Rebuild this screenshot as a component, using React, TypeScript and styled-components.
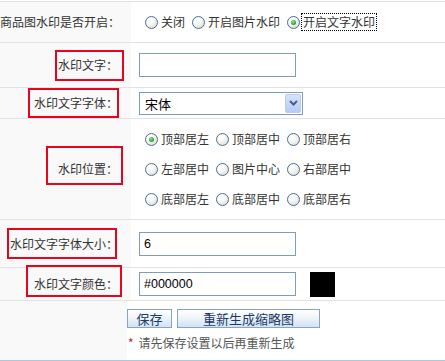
import styled, { createGlobalStyle } from 'styled-components'

const Global = createGlobalStyle`
  html, body {
    margin: 0;
    padding: 0;
    background: #fff;
    overflow: hidden;
  }
  body {
    font-family: "Noto Sans CJK SC", "Liberation Sans", sans-serif;
    font-size: 12px;
    color: #333;
  }
`

const Form = styled.div`
  width: 445px;
  padding-top: 1px;
`

const Row = styled.div<{ $h: number; $left?: number; $last?: boolean }>`
  display: grid;
  grid-template-columns: ${p => p.$left ?? 131}px 1fr;
  height: ${p => p.$h}px;
  border-top: 1px solid #e2e2e2;
  border-bottom: ${p => (p.$last ? '1px solid #a9c9e2' : 'none')};
`

const LabelCell = styled.div<{ $pr?: number }>`
  display: flex;
  align-items: center;
  justify-content: flex-end;
  padding-right: ${p => p.$pr ?? 13}px;
  background: #f9f9f9;
  white-space: nowrap;
`

const FieldCell = styled.div<{ $pad?: number }>`
  display: flex;
  align-items: center;
  padding-left: ${p => p.$pad ?? 8}px;
`

const Label = styled.span`
  position: relative;
  line-height: 14px;
  color: #333;
`

// red annotation frame drawn over the label
const Mark = styled.span<{ $inset: string }>`
  position: absolute;
  inset: ${p => p.$inset};
  border: 2px solid #e8041e;
`

const Radios = styled.div`
  display: flex;
  align-items: center;
  padding-left: 6px;
`

const PosGrid = styled.div`
  display: grid;
  grid-template-columns: repeat(3, max-content);
  grid-auto-rows: 30px;
  align-items: center;
  padding-left: 6px;
`

const Option = styled.label<{ $focus?: boolean }>`
  display: inline-flex;
  align-items: center;
  margin-right: 7px;
  white-space: nowrap;
  line-height: 14px;

  span {
    outline: ${p => (p.$focus ? '1px dotted #000' : 'none')};
    outline-offset: 1px;
  }
`

const Dot = styled.i<{ $on?: boolean }>`
  position: relative;
  display: inline-block;
  width: 11px;
  height: 11px;
  margin-right: 3px;
  border: 1px solid #4f6e92;
  border-radius: 50%;
  background: radial-gradient(circle at 35% 30%, #ffffff 20%, #e6e6e0 70%, #cfcfc8 100%);

  &::after {
    content: '';
    display: ${p => (p.$on ? 'block' : 'none')};
    position: absolute;
    left: 3px;
    top: 3px;
    width: 5px;
    height: 5px;
    border-radius: 50%;
    background: radial-gradient(circle at 40% 35%, #8de08d, #1f9a1f 75%);
  }
`

const TextBox = styled.div`
  box-sizing: border-box;
  width: 157px;
  height: 24px;
  padding: 0 4px;
  border: 1px solid #7f9db9;
  background: #fff;
  display: flex;
  align-items: center;
  font-family: "Liberation Sans", Arial, sans-serif;
  font-size: 12.5px;
  color: #000;
`

const Select = styled.div`
  box-sizing: border-box;
  width: 164px;
  height: 23px;
  padding: 1px 1px 1px 5px;
  border: 1px solid #7f9db9;
  background: #fff;
  display: flex;
  align-items: center;
  justify-content: space-between;
  font-size: 13px;
  color: #000;
`

const DropBtn = styled.span`
  box-sizing: border-box;
  width: 16px;
  height: 19px;
  display: flex;
  align-items: center;
  justify-content: center;
  border: 1px solid #bccbf0;
  border-radius: 2px;
  background: linear-gradient(#d6e2fd, #b8cbf6);
`

const Swatch = styled.div`
  width: 25px;
  height: 25px;
  margin-left: 14px;
  background: #000;
`

const Actions = styled.div`
  display: flex;
  flex-direction: column;
  padding-top: 8px;
`

const Buttons = styled.div`
  display: flex;
  gap: 5px;
`

const Button = styled.button<{ $w: number }>`
  box-sizing: border-box;
  width: ${p => p.$w}px;
  height: 19px;
  padding: 0;
  border: 1px solid #8aa3bf;
  background: linear-gradient(#ffffff, #f1f6fc 40%, #d3e2f4);
  font-family: "Noto Sans CJK SC", sans-serif;
  font-size: 13px;
  line-height: 15px;
  color: #1c3a66;
`

const Note = styled.div`
  margin-top: 8px;
  padding-left: 1px;
  line-height: 14px;
  color: #555;

  b {
    color: #e0101e;
    font-weight: normal;
    margin-right: 5px;
  }
`

const positions = [
  '顶部居左', '顶部居中', '顶部居右',
  '左部居中', '图片中心', '右部居中',
  '底部居左', '底部居中', '底部居右',
]

export default function App() {
  return (
    <Form>
      <Global />
      <Row $h={40}>
        <LabelCell $pr={11}>
          <Label>商品图水印是否开启：</Label>
        </LabelCell>
        <FieldCell>
          <Radios>
            <Option><Dot />关闭</Option>
            <Option><Dot />开启图片水印</Option>
            <Option $focus><Dot $on /><span>开启文字水印</span></Option>
          </Radios>
        </FieldCell>
      </Row>

      <Row $h={44}>
        <LabelCell>
          <Label>
            水印文字：
            <Mark $inset="-8px -6px -9px -3px" />
          </Label>
        </LabelCell>
        <FieldCell>
          <TextBox />
        </FieldCell>
      </Row>

      <Row $h={30}>
        <LabelCell>
          <Label>
            水印文字字体：
            <Mark $inset="-8px -1px -8px -6px" />
          </Label>
        </LabelCell>
        <FieldCell>
          <Select>
            宋体
            <DropBtn>
              <svg width="9" height="6" viewBox="0 0 9 6">
                <path d="M1 1 L4.5 4.5 L8 1" fill="none" stroke="#4a5f86" strokeWidth="2" />
              </svg>
            </DropBtn>
          </Select>
        </FieldCell>
      </Row>

      <Row $h={100}>
        <LabelCell>
          <Label>
            水印位置：
            <Mark $inset="-16px -5px -9px -12px" />
          </Label>
        </LabelCell>
        <FieldCell>
          <PosGrid>
            {positions.map((p, i) => (
              <Option key={p}>
                <Dot $on={i === 0} />
                {p}
              </Option>
            ))}
          </PosGrid>
        </FieldCell>
      </Row>

      <Row $h={47}>
        <LabelCell>
          <Label>
            水印文字字体大小：
            <Mark $inset="-9px 1px -8px -3px" />
          </Label>
        </LabelCell>
        <FieldCell>
          <TextBox>6</TextBox>
        </FieldCell>
      </Row>

      <Row $h={32}>
        <LabelCell>
          <Label>
            水印文字颜色：
            <Mark $inset="-12px -4px -6px -8px" />
          </Label>
        </LabelCell>
        <FieldCell>
          <TextBox>#000000</TextBox>
          <Swatch />
        </FieldCell>
      </Row>

      <Row $h={59} $left={127} $last>
        <LabelCell />
        <Actions>
          <Buttons>
            <Button $w={45}>保存</Button>
            <Button $w={143}>重新生成缩略图</Button>
          </Buttons>
          <Note>
            <b>*</b>请先保存设置以后再重新生成
          </Note>
        </Actions>
      </Row>
    </Form>
  )
}
